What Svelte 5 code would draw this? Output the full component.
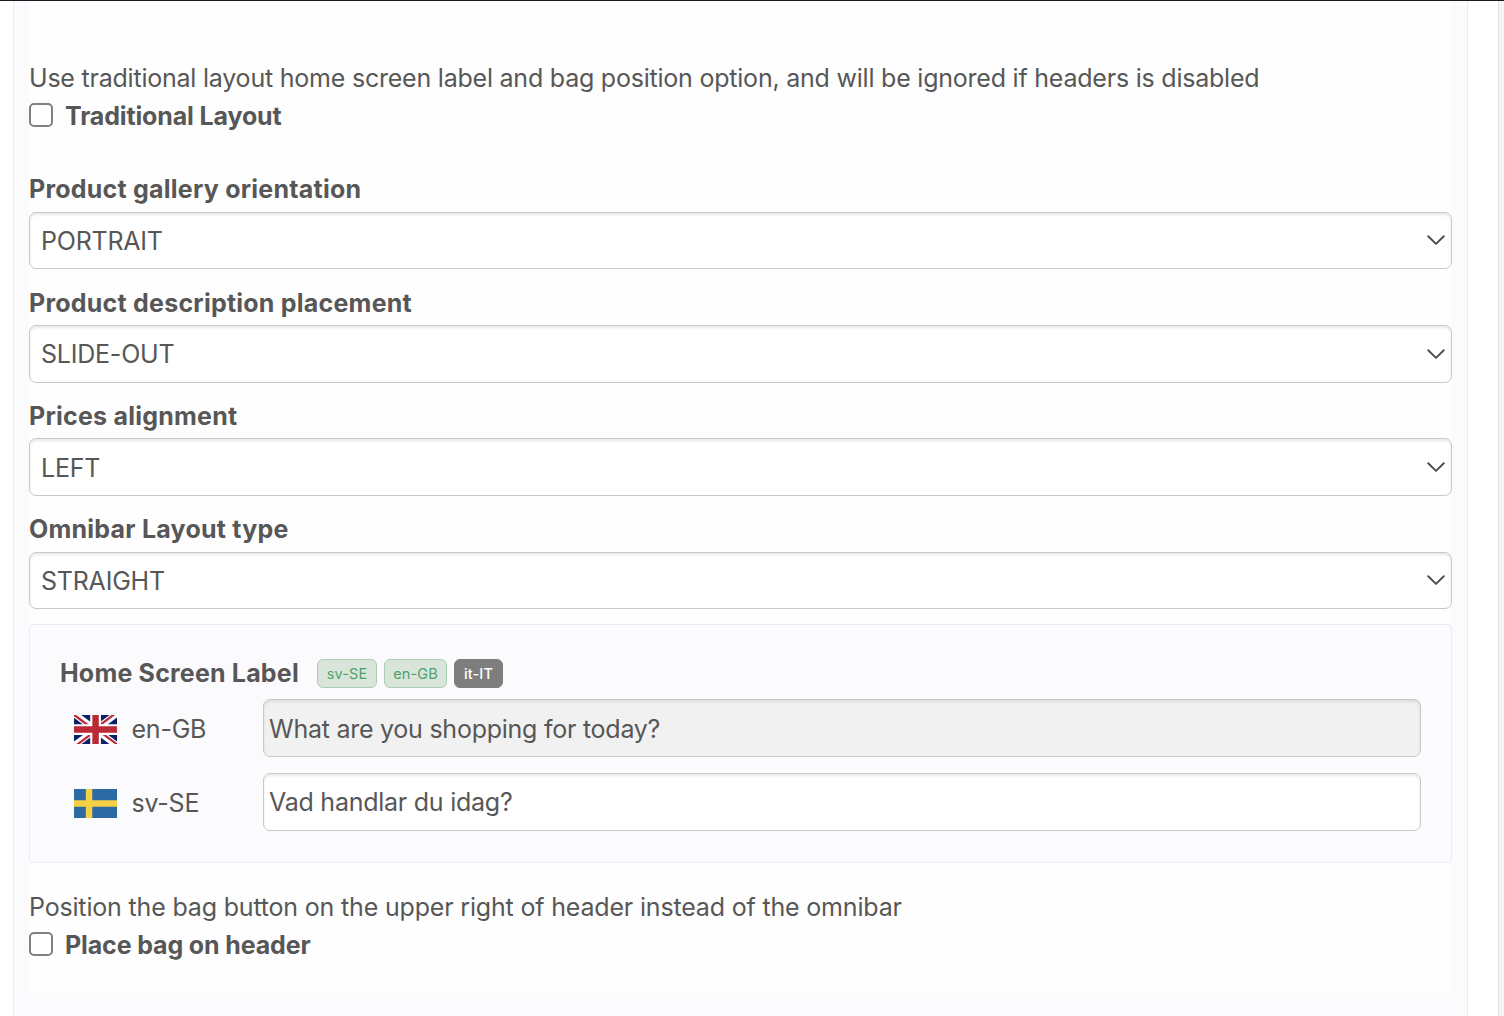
<script>
  const selects = [
    { label: 'Product gallery orientation', value: 'PORTRAIT' },
    { label: 'Product description placement', value: 'SLIDE-OUT' },
    { label: 'Prices alignment', value: 'LEFT' },
    { label: 'Omnibar Layout type', value: 'STRAIGHT' }
  ];
</script>

<div class="page">
  <main class="card">
    <section class="panel">
      <div class="form">
        <p class="hint">Use traditional layout home screen label and bag position option, and will be ignored if headers is disabled</p>
        <div class="check"><i class="box"></i><b>Traditional Layout</b></div>

        <div class="selects">
          {#each selects as s (s.label)}
            <div class="field">
              <b class="label">{s.label}</b>
              <div class="control select">
                <span>{s.value}</span>
                <svg class="chevron" viewBox="0 0 20 12" width="20" height="12"><path d="M2.2 2.2 L10 9.9 L17.8 2.2" fill="none" stroke="#4c4c4c" stroke-width="1.9" stroke-linecap="round" stroke-linejoin="round" /></svg>
              </div>
            </div>
          {/each}
        </div>

        <div class="translations">
          <header>
            <b class="title">Home Screen Label</b>
            <span class="badge">sv-SE</span>
            <span class="badge wide">en-GB</span>
            <span class="badge missing">it-IT</span>
          </header>
          <div class="row">
            <svg class="flag" viewBox="0 24 640 432" width="43" height="29" preserveAspectRatio="xMidYMid slice">
              <path fill="#0a1f66" d="M0 0h640v480H0z" />
              <path fill="#fff" d="m75 0 244 181L562 0h78v62L400 241l240 178v61h-80L320 301 81 480H0v-60l239-178L0 64V0z" />
              <path fill="#bd2a37" d="m424 281 216 159v40L369 281zm-184 20 6 35L54 480H0zM640 0v3L391 191l2-44L590 0zM0 0l239 176h-60L0 42z" />
              <path fill="#fff" d="M241 0v480h160V0zM0 160v160h640V160z" />
              <path fill="#ba2a35" d="M0 193v96h640v-96zM273 0v480h96V0z" />
            </svg>
            <span class="code">en-GB</span>
            <div class="control input disabled">What are you shopping for today?</div>
          </div>
          <div class="row">
            <svg class="flag" viewBox="0 24 640 432" width="43" height="29" preserveAspectRatio="xMidYMid slice">
              <path fill="#2d69a3" d="M0 0h640v480H0z" />
              <path fill="#f6d045" d="M0 192h640v96H0zM176 0h96v480h-96z" />
            </svg>
            <span class="code">sv-SE</span>
            <div class="control input">Vad handlar du idag?</div>
          </div>
        </div>

        <p class="hint bag-hint">Position the bag button on the upper right of header instead of the omnibar</p>
        <div class="check"><i class="box"></i><b>Place bag on header</b></div>
      </div>
    </section>
  </main>
</div>

<style>
  :global(body) { margin: 0; background: #f4f5f8; }
  .page {
    box-sizing: border-box;
    width: 1504px;
    height: 1016px;
    overflow: hidden;
    border-top: 1px solid #1b191d;
    background: #f4f5f8;
    color: #575757;
    font: 25px/38px Inter, "Liberation Sans", sans-serif;
    letter-spacing: -0.22px;
    white-space: nowrap;
  }
  .card {
    box-sizing: border-box;
    width: 1499px;
    height: 100%;
    padding: 0 30px 0 13px;
    border-right: 1px solid #e1e2e6;
    background: #fff;
  }
  .panel {
    box-sizing: border-box;
    width: 1455px;
    height: 100%;
    padding: 0 15px;
    border: solid #ebebf1;
    border-width: 0 1px;
    background: #fbfbfd;
  }
  .form {
    box-sizing: border-box;
    width: 1423px;
    height: 992px;
    padding-top: 58px;
    border-radius: 0 0 7px 7px;
    background: #fefefe;
  }
  .hint { margin: 0; height: 38px; }
  .check { display: flex; align-items: center; gap: 12.5px; height: 38px; }
  .check b { font-weight: 650; letter-spacing: -0.14px; }
  .box {
    box-sizing: border-box;
    width: 23.5px;
    height: 23.5px;
    margin-bottom: 2px;
    border: 2px solid #808080;
    border-radius: 5px;
    background: #fff;
  }
  b { font-weight: 700; letter-spacing: 0.23px; }
  .selects { padding-top: 34.7px; }
  .field { display: flex; flex-direction: column; height: 113.33px; }
  .label { box-sizing: border-box; display: block; height: 42px; padding-top: 0.5px; line-height: 39px; }
  .control {
    box-sizing: border-box;
    display: flex;
    align-items: center;
    height: 57.5px;
    border: 1px solid #c8c8c8;
    border-radius: 7px;
    background: #fff;
    box-shadow: inset 0 2px 3px rgba(0, 0, 0, 0.09);
  }
  .select { justify-content: space-between; padding: 0 5px 0 11px; }
  .select span { padding-top: 1.3px; }
  .translations {
    box-sizing: border-box;
    height: 239px;
    margin-top: 1px;
    padding: 29px 30px 0;
    border: 1px solid #eaeaf1;
    border-radius: 4px;
    background: #fbfbfd;
  }
  .translations header { display: flex; align-items: center; height: 39px; }
  .title { width: 257px; height: 39px; line-height: 39px; letter-spacing: 0.19px; }
  .badge {
    box-sizing: border-box;
    width: 60px;
    height: 29px;
    margin-right: 7px;
    border: 1px solid #a9cfb3;
    border-radius: 6px;
    background: #d9e5db;
    color: #4fa267;
    font-size: 14.5px;
    font-weight: 400;
    letter-spacing: 0.15px;
    line-height: 28px;
    text-align: center;
  }
  .wide { width: 63px; }
  .missing { width: 49px; border-color: #7e7e7e; background: #7e7e7e; color: #fff; font-weight: 450; }
  .row { display: flex; align-items: center; height: 58px; margin: 6px 0 16px; padding-left: 14px; }
  .row + .row { margin-top: 0; }
  .flag { margin: 2px 14.5px 0 0; }
  .code { width: 131.5px; padding-top: 2px; }
  .input { flex: 1; height: 58px; padding-left: 5px; letter-spacing: -0.25px; }
  .disabled { padding-top: 2px; background: #f1f1f1; }
  .bag-hint { margin-top: 25px; letter-spacing: -0.175px; }
</style>
